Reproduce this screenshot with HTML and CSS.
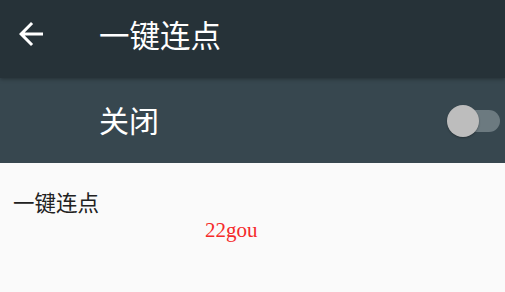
FILE: index.html
```html
<!DOCTYPE html>
<html lang="zh">
<head>
    <meta charset="UTF-8">
    <meta name="viewport" content="width=device-width, initial-scale=1.0">
    <title>一键连点</title>
    <link rel="stylesheet" href="styles.css">
</head>
<body>
    <header class="toolbar">
        <div class="toolbar-row">
            <svg class="back" viewBox="0 0 24 24" width="36" height="36">
                <path d="M20 11H7.83l5.59-5.59L12 4l-8 8 8 8 1.41-1.41L7.83 13H20v-2z" fill="#fff"/>
            </svg>
            <h1>一键连点</h1>
        </div>
    </header>

    <div class="switch-bar">
        <span class="switch-label">关闭</span>
        <div class="switch">
            <div class="track"></div>
            <div class="thumb"></div>
        </div>
    </div>

    <div class="content">
        <p class="item">一键连点</p>
        <p class="brand">22gou</p>
    </div>
</body>
</html>
```

FILE: styles.css
```css
body {
    margin: 0;
    font-family: "Noto Sans CJK SC", "Noto Sans", sans-serif;
    background: #fafafa;
    width: 505px;
    height: 292px;
    overflow: hidden;
}

.toolbar {
    height: 78px;
    background: #263238;
    position: relative;
    z-index: 1;
    box-shadow: 0 1px 4px rgba(0, 0, 0, 0.35);
}

.toolbar-row {
    height: 68px;
    display: flex;
    align-items: center;
}

.back {
    margin-left: 13px;
    margin-right: 50px;
}

h1 {
    margin: 0;
    color: #fff;
    font-size: 30.5px;
    font-weight: normal;
}

.switch-bar {
    height: 85px;
    background: #37474f;
    display: flex;
    align-items: center;
    padding-left: 99px;
    padding-right: 5px;
}

.switch-label {
    color: #fff;
    font-size: 30px;
    flex: 1;
    padding-bottom: 4px;
}

.switch {
    position: relative;
    width: 53px;
    height: 34px;
}

.track {
    position: absolute;
    left: 6px;
    right: 0;
    top: 6px;
    height: 22px;
    border-radius: 11px;
    background: #6c7a80;
}

.thumb {
    position: absolute;
    left: 0;
    top: 1px;
    width: 32px;
    height: 32px;
    border-radius: 50%;
    background: #bdbdbd;
    box-shadow: 0 1px 2px rgba(0, 0, 0, 0.3);
}

.content {
    padding: 24px 13px 0;
}

.item {
    margin: 0;
    color: #212121;
    font-size: 21.5px;
    line-height: 30px;
}

.brand {
    margin: 0 0 0 192px;
    color: #f52a2a;
    font-family: "Liberation Serif", serif;
    font-size: 21px;
    line-height: 26px;
}
```
